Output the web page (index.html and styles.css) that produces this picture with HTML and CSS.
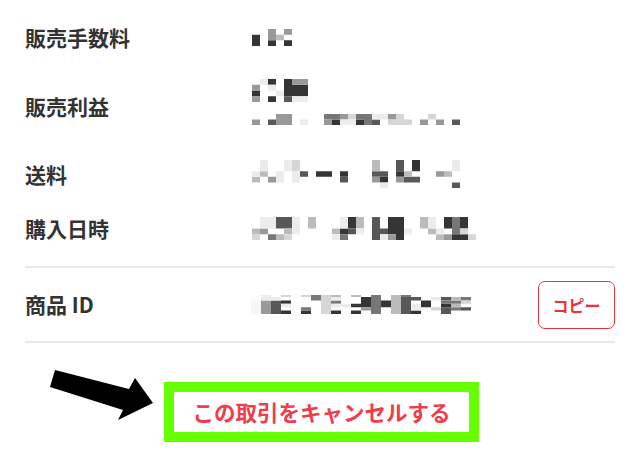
FILE: index.html
```html
<!DOCTYPE html>
<html lang="ja">
<head>
<meta charset="utf-8">
<title>取引情報</title>
<link rel="stylesheet" href="styles.css">
</head>
<body>
<div class="page">
  <div class="row row-fee">
    <div class="label">販売手数料</div>
    <div class="value">
      <svg class="mosaic m-a" viewBox="0 0 5 3" preserveAspectRatio="none">
        <path class="c1" d="M0 1h1v2h-1z M2 2h1v1h-1z M4 2h1v1h-1z"/>
        <path class="c4" d="M2 0h1v2h-1z M4 0h1v1h-1z"/>
        <path class="c5" d="M3 1h1v1h-1z"/>
      </svg>
    </div>
  </div>

  <div class="row row-profit">
    <div class="label">販売利益</div>
    <div class="value value-stack">
      <svg class="mosaic m-b" viewBox="0 0 7 4" preserveAspectRatio="none">
        <path class="c1" d="M2 0h1v1h-1z M4 0h1v3h-1z M5 1h2v2h-2z M0 2h1v1h-1z M2 3h1v1h-1z"/>
        <path class="c2" d="M4 3h1v1h-1z"/>
        <path class="c4" d="M5 0h2v1h-2z M0 1h1v1h-1z M0 3h1v1h-1z"/>
        <path class="c7" d="M1 0h1v1h-1z M2 1h1v1h-1z M3 2h1v1h-1z M5 3h2v1h-2z"/>
      </svg>
      <svg class="mosaic m-c" viewBox="0 0 26 2" preserveAspectRatio="none">
        <path class="c1" d="M10 1h1v1h-1z M13 1h1v1h-1z"/>
        <path class="c2" d="M2 1h1v1h-1z M15 1h1v1h-1z M25 1h1v1h-1z"/>
        <path class="c3" d="M9 0h2v1h-2z M13 0h2v1h-2z M14 1h1v1h-1z"/>
        <path class="c4" d="M3 0h2v2h-2z M11 0h1v1h-1z M17 0h1v1h-1z M0 1h1v1h-1z M9 1h1v1h-1z M21 1h1v1h-1z M23 1h1v1h-1z"/>
        <path class="c6" d="M12 0h1v1h-1z M18 0h1v1h-1z M22 0h1v1h-1z M17 1h3v1h-3z"/>
        <path class="c7" d="M15 0h2v1h-2z M6 1h1v1h-1z M11 1h2v1h-2z"/>
      </svg>
    </div>
  </div>

  <div class="row row-ship">
    <div class="label">送料</div>
    <div class="value">
      <svg class="mosaic m-d" viewBox="0 0 26 5" preserveAspectRatio="none">
        <path class="c1" d="M20 0h1v2h-1z M8 2h2v1h-2z M11 2h1v1h-1z M18 2h1v1h-1z M16 3h1v1h-1z"/>
        <path class="c2" d="M18 0h1v2h-1z M6 2h1v1h-1z M15 2h2v1h-2z M11 3h1v1h-1z M19 3h2v1h-2z M25 4h1v1h-1z"/>
        <path class="c4" d="M23 2h1v1h-1z M2 3h1v1h-1z M15 3h1v1h-1z M18 3h1v1h-1z"/>
        <path class="c5" d="M15 0h1v2h-1z M1 2h1v1h-1z M19 2h1v1h-1z M24 2h1v1h-1z M0 3h1v1h-1z"/>
        <path class="c6" d="M5 0h1v2h-1z"/>
        <path class="c7" d="M1 0h1v2h-1z M4 0h1v2h-1z M25 0h1v2h-1z M0 2h1v1h-1z M3 2h1v1h-1z M5 2h1v2h-1z M3 3h1v1h-1z M16 4h1v1h-1z"/>
      </svg>
    </div>
  </div>

  <div class="row row-date">
    <div class="label">購入日時</div>
    <div class="value">
      <svg class="mosaic m-e" viewBox="0 0 28 4" preserveAspectRatio="none">
        <path class="c1" d="M12 0h1v2h-1z M17 0h2v2h-2z M24 0h1v2h-1z M26 0h1v2h-1z M11 2h1v1h-1z M17 2h2v1h-2z M18 3h1v1h-1z M25 3h2v1h-2z"/>
        <path class="c2" d="M3 0h2v2h-2z M15 0h1v4h-1z M12 2h1v1h-1z M16 2h1v1h-1z"/>
        <path class="c3" d="M25 0h1v3h-1z M2 3h1v1h-1z M11 3h1v1h-1z"/>
        <path class="c4" d="M1 2h1v1h-1z M17 3h1v1h-1z M24 3h1v1h-1z"/>
        <path class="c5" d="M7 0h1v2h-1z M13 0h1v2h-1z M21 0h1v2h-1z M0 2h1v1h-1z M4 2h1v1h-1z M10 2h1v1h-1z M22 2h1v1h-1z M3 3h1v1h-1z M23 3h1v1h-1z"/>
        <path class="c6" d="M26 2h1v1h-1z M0 3h1v1h-1z M4 3h1v1h-1z M27 3h1v1h-1z"/>
        <path class="c7" d="M1 0h2v2h-2z M5 0h1v3h-1z M11 0h1v2h-1z M22 0h1v2h-1z M13 2h1v1h-1z M19 2h1v1h-1z M23 2h1v1h-1z M10 3h1v1h-1z M16 3h1v1h-1z"/>
      </svg>
    </div>
  </div>

  <div class="id-block">
    <div class="row row-id">
      <div class="label">商品 ID</div>
      <div class="value value-grow">
        <svg class="mosaic m-f" viewBox="0 0 22 19" preserveAspectRatio="none">
          <path class="c1" d="M3 5.4h1v3.4h-1z M3 15.6h1v3.4h-1z M5 15.6h1v3.4h-1z M8 15.6h1v3.4h-1z M10 8.8h1v3.4h-1z M10 15.6h1v3.4h-1z M11 2h1v10.2h-1z M13 5.4h1v6.8h-1z M16 15.6h1v3.4h-1z M17 5.4h1v6.8h-1z M19 8.8h1v3.4h-1z"/>
          <path class="c2" d="M2 5.4h1v13.6h-1z M15 2h1v17h-1z M16 2h1v3.4h-1z M19 2h1v3.4h-1z M19 12.2h1v6.8h-1z M21 12.2h1v3.4h-1z"/>
          <path class="c3" d="M5 12.2h1v3.4h-1z M6 0h1v5.4h-1z M8 5.4h1v3.4h-1z M12 0h1v19h-1z M15 0h1v2h-1z M19 5.4h1v3.4h-1z M20 5.4h1v3.4h-1z M20 12.2h1v3.4h-1z M21 2h1v3.4h-1z"/>
          <path class="c4" d="M1 5.4h1v13.6h-1z M11 12.2h1v3.4h-1z"/>
          <path class="c5" d="M8 0h1v2h-1z M10 0h1v2h-1z M14 0h1v19h-1z M20 2h1v3.4h-1z M20 8.8h1v3.4h-1z"/>
          <path class="c6" d="M3 0h1v2h-1z M5 0h1v2h-1z M7 0h1v19h-1z M18 12.2h1v3.4h-1z M21 5.4h1v3.4h-1z"/>
          <path class="c7" d="M1 0h1v5.4h-1z M2 2h1v3.4h-1z M3 8.8h1v3.4h-1z M8 2h1v3.4h-1z M8 8.8h1v3.4h-1z M9 8.8h1v3.4h-1z M16 8.8h1v6.8h-1z M18 2h1v3.4h-1z"/>
          <path class="c8" d="M0 5.4h1v13.6h-1z"/>
        </svg>
      </div>
      <button class="copy-btn" type="button">コピー</button>
    </div>
  </div>

  <div class="cancel-wrap">
    <div class="cancel-box">この取引をキャンセルする</div>
  </div>

  <svg class="arrow" viewBox="0 0 640 460">
    <polygon points="55,370 129,389 135,378 153,403 118,420 123,410 50,387" fill="#000"/>
  </svg>
</div>
</body>
</html>
```
FILE: styles.css
```css
html, body {
  margin: 0;
  padding: 0;
  background: #fff;
}

body {
  font-family: "Noto Sans CJK JP", "Noto Sans", sans-serif;
  color: #333;
}

.page {
  position: relative;
  width: 640px;
  height: 460px;
  overflow: hidden;
  box-sizing: border-box;
  padding: 10px 25px 0;
}

.row {
  display: flex;
  align-items: center;
}

.label {
  width: 227px;
  flex: none;
  font-size: 21px;
  font-weight: 700;
  line-height: 1;
  color: #333;
}

.value {
  display: flex;
}

.value-stack {
  flex-direction: column;
  align-self: flex-start;
  padding-top: 15px;
  gap: 12px;
}

.value-grow {
  flex: 1;
}

.row-fee { height: 54px; }
.row-profit { height: 84px; }
.row-ship { height: 52px; }
.row-date { height: 56px; }

.id-block {
  margin-top: 10px;
  border-top: 2px solid #e8e8e8;
  border-bottom: 2px solid #e8e8e8;
}

.row-id { height: 73px; }

.mosaic { display: block; }
.m-a { width: 40px; height: 17px; }
.m-b { width: 56px; height: 23px; }
.m-c { width: 208px; height: 11px; }
.m-d { width: 208px; height: 28px; }
.m-e { width: 224px; height: 23px; }
.m-f { width: 220px; height: 19px; margin-left: -1px; }

.c1 { fill: #353535; }
.c2 { fill: #585858; }
.c3 { fill: #777; }
.c4 { fill: #999; }
.c5 { fill: #bbb; }
.c6 { fill: #d6d6d6; }
.c7 { fill: #ececec; }
.c8 { fill: #f6f6f6; }

.copy-btn {
  flex: none;
  width: 77px;
  height: 48px;
  box-sizing: border-box;
  border: 1.5px solid #e8323e;
  border-radius: 7px;
  background: #fff;
  color: #e8323e;
  font-family: "Noto Sans CJK JP", sans-serif;
  font-size: 16px;
  font-weight: 700;
  padding: 0;
  display: flex;
  align-items: center;
  justify-content: center;
}

.cancel-wrap {
  margin-top: 39px;
  display: flex;
  justify-content: center;
  padding-left: 3px;
}

.cancel-box {
  width: 315px;
  height: 60px;
  box-sizing: border-box;
  border: 10px solid #66ff00;
  display: flex;
  align-items: center;
  justify-content: center;
  color: #f03c4b;
  font-size: 21.5px;
  font-weight: 700;
  line-height: 1;
}

.arrow {
  position: absolute;
  left: 0;
  top: 0;
  width: 640px;
  height: 460px;
  pointer-events: none;
}
```
